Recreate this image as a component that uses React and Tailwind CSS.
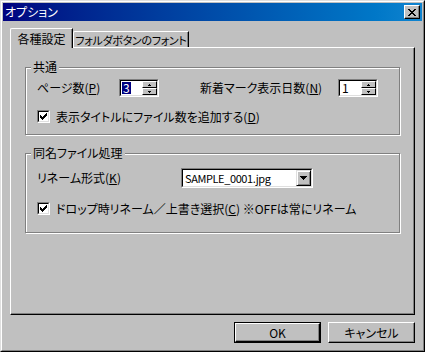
import React from "react";

const F = "font-['Noto_Sans_CJK_JP',sans-serif] [font-feature-settings:'palt']";

function CloseX() {
  return (
    <svg width="8" height="7" viewBox="0 0 8 7" shapeRendering="crispEdges">
      <path
        fill="#000"
        d="M0 0h2v1h-2z M6 0h2v1h-2z M1 1h2v1h-2z M5 1h2v1h-2z M2 2h4v1h-4z M3 3h2v1h-2z M2 4h4v1h-4z M1 5h2v1h-2z M5 5h2v1h-2z M0 6h2v1h-2z M6 6h2v1h-2z"
      />
    </svg>
  );
}

function Check() {
  return (
    <svg width="7" height="7" viewBox="0 0 7 7" shapeRendering="crispEdges">
      <path
        fill="#000"
        d="M6 0h1v1h-1z M5 1h2v1h-2z M0 2h1v1h-1z M4 2h3v1h-3z M0 3h2v1h-2z M3 3h3v1h-3z M0 4h5v1h-5z M1 5h3v1h-3z M2 6h1v1h-1z"
      />
    </svg>
  );
}

function Checkbox() {
  return (
    <div className="w-[13px] h-[13px] shrink-0 border border-t-[#808080] border-l-[#808080] border-r-white border-b-white">
      <div className="w-full h-full border border-t-black border-l-black border-r-[#dfdfdf] border-b-[#dfdfdf] bg-white flex items-center justify-center">
        <Check />
      </div>
    </div>
  );
}

function SpinBtn({ up }) {
  return (
    <div className="h-[7px] bg-[#c0c0c0] border border-t-white border-l-white border-r-black border-b-black flex items-center justify-center">
      <svg width="3" height="2" viewBox="0 0 3 2" shapeRendering="crispEdges">
        <path fill="#000" d={up ? "M1 0h1v1h-1z M0 1h3v1h-3z" : "M0 0h3v1h-3z M1 1h1v1h-1z"} />
      </svg>
    </div>
  );
}

function Spin({ value, selected }) {
  return (
    <div className="w-[40px] h-[18px] shrink-0 border border-t-[#808080] border-l-[#808080] border-r-white border-b-white">
      <div className="w-full h-full border border-t-black border-l-black border-r-[#dfdfdf] border-b-[#dfdfdf] bg-white flex">
        <div className="flex-1 flex items-center pl-px">
          <span
            className={
              "text-[12px] leading-[12px] px-px " +
              (selected ? "bg-[#000080] text-white" : "text-black")
            }
          >
            {value}
          </span>
        </div>
        <div className="w-[15px] flex flex-col">
          <SpinBtn up />
          <SpinBtn />
        </div>
      </div>
    </div>
  );
}

function Group({ label, className, children }) {
  return (
    <div
      className={
        "relative border border-[#808080] shadow-[inset_1px_1px_0_#fff,1px_1px_0_#fff] " +
        className
      }
    >
      <div className="absolute left-[5px] top-[-8px] px-[2px] bg-[#c0c0c0] text-[12px] leading-[14px] text-black whitespace-nowrap">
        {label}
      </div>
      {children}
    </div>
  );
}

function U({ c }) {
  return (
    <>
      (<span className="underline underline-offset-1">{c}</span>)
    </>
  );
}

export default function App() {
  return (
    <div className={"w-[425px] h-[352px] border border-t-[#dfdfdf] border-l-[#dfdfdf] border-r-black border-b-black bg-[#c0c0c0] text-black " + F}>
      <div className="h-full border border-t-white border-l-white border-r-[#808080] border-b-[#808080] p-px flex flex-col">
        {/* Title bar */}
        <div className="h-[18px] shrink-0 flex items-center justify-between pl-[2px] pr-[2px] bg-linear-to-r from-[#000080] to-[#1084d0]">
          <span className="text-white text-[12px] leading-[14px]">オプション</span>
          <div className="w-[16px] h-[14px] bg-[#c0c0c0] border border-t-white border-l-white border-r-black border-b-black shadow-[inset_-1px_-1px_0_#808080] flex items-center justify-center">
            <CloseX />
          </div>
        </div>

        {/* Body */}
        <div className="flex-1 flex flex-col px-[7px] pt-[7px]">
          {/* Tabs */}
          <div className="h-[19px] flex items-end shrink-0">
            <div className="relative z-10 -mb-px h-[20px] w-[63px] bg-[#c0c0c0] border-l border-t border-l-white border-t-white border-r border-r-black shadow-[inset_-1px_0_0_#808080] rounded-tl-[2px] flex items-center justify-center text-[12px] leading-[14px]">
              各種設定
            </div>
            <div className="h-[16px] w-[116px] border-l border-t border-l-white border-t-white border-r border-r-black shadow-[inset_-1px_0_0_#808080] rounded-tl-[2px] flex items-center justify-center text-[11px] leading-[14px] whitespace-nowrap tracking-[-0.3px]">
              フォルダボタンのフォント
            </div>
          </div>

          {/* Panel */}
          <div className="h-[268px] shrink-0 border border-t-white border-l-white border-r-black border-b-black shadow-[inset_-1px_-1px_0_#808080] pl-[14px] pr-[14px] pt-[19px] flex flex-col">
            <Group label="共通" className="h-[68px] pt-[11px] pl-[11px]">
              <div className="h-[18px] flex items-center text-[12px] leading-[14px] whitespace-nowrap">
                <span className="w-[82px] shrink-0">
                  ページ数<U c="P" />
                </span>
                <Spin value="3" selected />
                <span className="ml-[41px] w-[138px] shrink-0">
                  新着マーク表示日数<U c="N" />
                </span>
                <Spin value="1" />
              </div>
              <div className="mt-[13px] h-[13px] flex items-center gap-[6px] text-[12px] leading-[14px] whitespace-nowrap">
                <Checkbox />
                <span>
                  表示タイトルにファイル数を追加する<U c="D" />
                </span>
              </div>
            </Group>

            <Group label="同名ファイル処理" className="mt-[18px] h-[80px] pt-[14px] pl-[11px]">
              <div className="h-[20px] flex items-center text-[12px] leading-[14px] whitespace-nowrap">
                <span className="w-[144px] shrink-0">
                  リネーム形式<U c="K" />
                </span>
                <div className="w-[132px] h-[20px] shrink-0 border border-t-[#808080] border-l-[#808080] border-r-white border-b-white">
                  <div className="w-full h-full border border-t-black border-l-black border-r-[#dfdfdf] border-b-[#dfdfdf] bg-white flex">
                    <div className="flex-1 flex items-center pl-[2px] text-[11px] leading-[14px] tracking-[-0.4px]">
                      SAMPLE_0001.jpg
                    </div>
                    <div className="w-[15px] h-full bg-[#c0c0c0] border border-t-[#dfdfdf] border-l-[#dfdfdf] border-r-black border-b-black shadow-[inset_1px_1px_0_#fff,inset_-1px_-1px_0_#808080] flex items-center justify-center">
                      <svg width="7" height="4" viewBox="0 0 7 4" shapeRendering="crispEdges">
                        <path fill="#000" d="M0 0h7v1h-7z M1 1h5v1h-5z M2 2h3v1h-3z M3 3h1v1h-1z" />
                      </svg>
                    </div>
                  </div>
                </div>
              </div>
              <div className="mt-[14px] h-[13px] flex items-center gap-[6px] text-[12px] leading-[14px] whitespace-nowrap">
                <Checkbox />
                <span>
                  ドロップ時リネーム／上書き選択<U c="C" /> ※OFFは常にリネーム
                </span>
              </div>
            </Group>
          </div>

          {/* Buttons */}
          <div className="mt-[7px] flex justify-end gap-[7px]">
            <div className="w-[87px] h-[21px] border border-black bg-[#c0c0c0]">
              <div className="w-full h-full border border-t-white border-l-white border-r-black border-b-black shadow-[inset_-1px_-1px_0_#808080] flex items-center justify-center text-[12px] leading-[14px]">
                OK
              </div>
            </div>
            <div className="w-[87px] h-[21px] bg-[#c0c0c0] border border-t-white border-l-white border-r-black border-b-black shadow-[inset_-1px_-1px_0_#808080] flex items-center justify-center text-[12px] leading-[14px]">
              キャンセル
            </div>
          </div>
        </div>
      </div>
    </div>
  );
}
